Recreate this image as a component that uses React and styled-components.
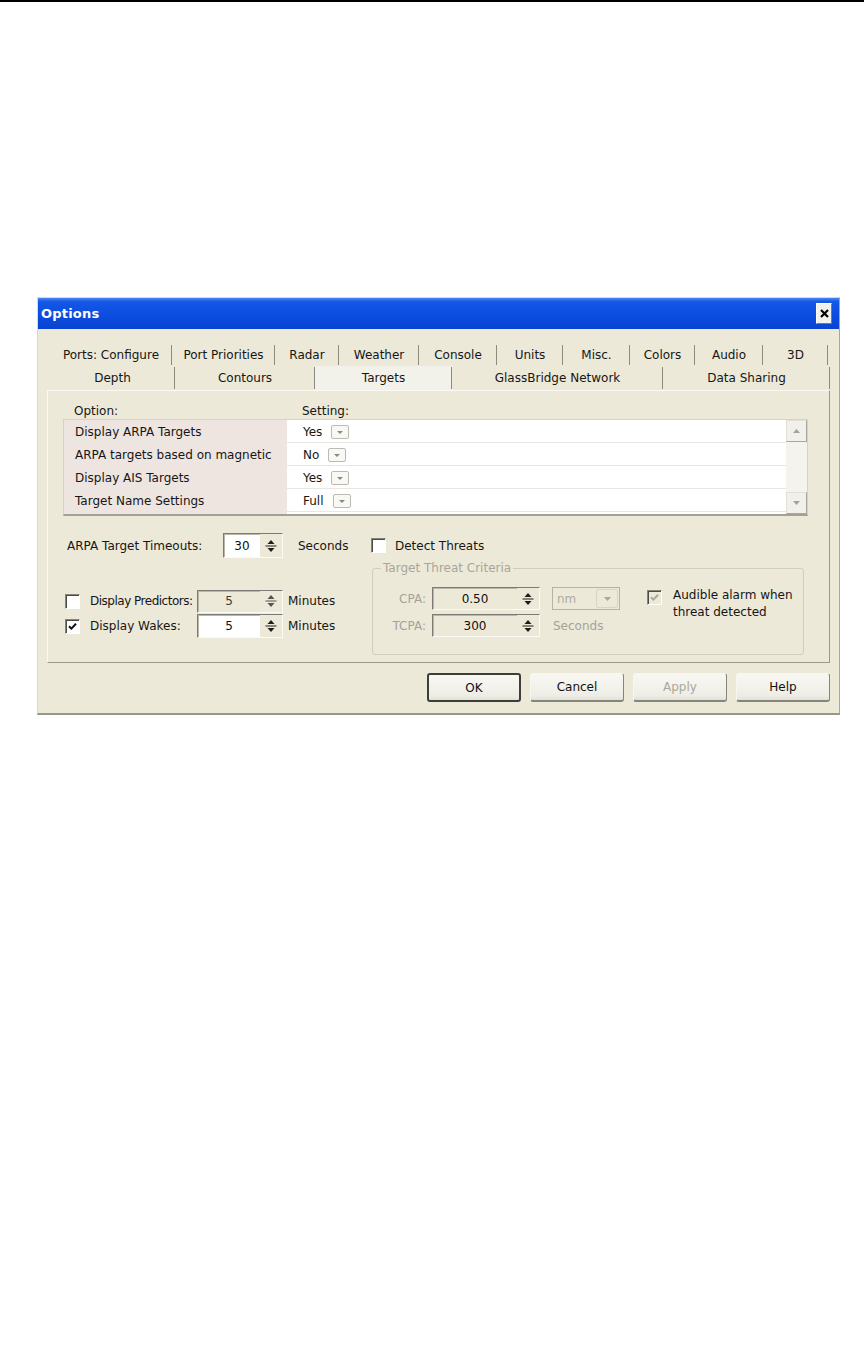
import React from 'react';
import styled, { createGlobalStyle } from 'styled-components';

const GlobalStyle = createGlobalStyle`
  html, body {
    margin: 0;
    padding: 0;
    background: #fff;
  }
  body {
    font-family: 'DejaVu Sans', 'Liberation Sans', sans-serif;
    font-size: 12px;
    color: #161616;
  }
`;

const Page = styled.div`
  width: 864px;
  min-height: 1354px;
  display: flex;
  flex-direction: column;
`;

const TopRule = styled.div`
  height: 2px;
  background: #000;
`;

const Dialog = styled.div`
  margin: 295px 0 0 37px;
  width: 803px;
  box-sizing: border-box;
  background: #ece9d8;
  border: 1px solid #dcd9ca;
  border-right-color: #a9a799;
  border-bottom: 2px solid #99978a;
`;

const TitleBar = styled.div`
  height: 31px;
  display: flex;
  align-items: center;
  justify-content: space-between;
  padding: 0 7px 0 3px;
  background: linear-gradient(180deg, #4a86f2 0%, #1458e6 12%, #0b4cde 60%, #0943d0 100%);
`;

const TitleText = styled.span`
  color: #fff;
  font-weight: bold;
  font-size: 13px;
  letter-spacing: 0.2px;
`;

const CloseButton = styled.div`
  width: 16px;
  height: 21px;
  box-sizing: border-box;
  display: flex;
  align-items: center;
  justify-content: center;
  background: #f2f1ea;
  border: 1px solid #fff;
  border-right-color: #7a7a72;
  border-bottom-color: #7a7a72;
`;

const Body = styled.div`
  padding: 13px 9px 11px 9px;
`;

const TabStrip = styled.div`
  margin-left: 3px;
  display: flex;
  flex-direction: column;
`;

const TabRow = styled.div`
  display: flex;
  height: 24px;
  padding-top: ${(p) => p.$pt || 0}px;
  box-sizing: border-box;
`;

const Tab = styled.div`
  position: relative;
  width: ${(p) => p.$w}px;
  box-sizing: border-box;
  display: flex;
  align-items: center;
  justify-content: center;
  white-space: nowrap;
  background: ${(p) => (p.$active ? '#f3f2ea' : 'transparent')};
  &::after {
    content: '';
    position: absolute;
    right: 0;
    top: 1px;
    bottom: 1px;
    width: 1px;
    background: #8d8b80;
  }
`;

const Panel = styled.div`
  height: 273px;
  box-sizing: border-box;
  border: 1px solid #faf9f4;
  border-right-color: #9b998d;
  border-bottom-color: #9b998d;
  padding: 12px 0 0 15px;
`;

const ListHeader = styled.div`
  display: flex;
  height: 16px;
  align-items: center;
`;

const HeaderCell = styled.div`
  width: ${(p) => (p.$w ? `${p.$w}px` : 'auto')};
  padding-left: ${(p) => p.$pl}px;
  box-sizing: border-box;
`;

const ListBox = styled.div`
  width: 745px;
  height: 97px;
  box-sizing: border-box;
  display: flex;
  border: 1px solid #d6d3c6;
  border-bottom: 2px solid #a3a194;
`;

const ListRows = styled.div`
  flex: 1;
  display: flex;
  flex-direction: column;
  background: linear-gradient(to right, #eee5e1 0, #eee5e1 223px, #fff 223px);
`;

const ListRow = styled.div`
  display: flex;
  height: 23px;
  box-sizing: border-box;
  border-bottom: 1px solid #e9e7e2;
`;

const OptionCell = styled.div`
  width: 223px;
  padding-left: 11px;
  box-sizing: border-box;
  display: flex;
  align-items: center;
  padding-top: 2px;
  white-space: nowrap;
`;

const SettingCell = styled.div`
  flex: 1;
  display: flex;
  align-items: center;
  gap: 9px;
  padding: 2px 0 0 16px;
`;

const MiniCombo = styled.div`
  width: 18px;
  height: 14px;
  box-sizing: border-box;
  display: flex;
  align-items: center;
  justify-content: center;
  border: 1px solid #bcbab2;
  border-radius: 2px;
  background: #f8f8f5;
`;

const ScrollBar = styled.div`
  width: 21px;
  display: flex;
  flex-direction: column;
  background: #f4f3ee;
`;

const ScrollButton = styled.div`
  height: 22px;
  box-sizing: border-box;
  display: flex;
  align-items: center;
  justify-content: center;
  background: #f1f0ea;
  border: 1px solid #e2e0d6;
  border-right-color: #a9a79b;
  border-bottom-color: #a9a79b;
`;

const ScrollTrack = styled.div`
  flex: 1;
`;

const Controls = styled.div`
  margin-top: 17px;
  padding-left: 2px;
  display: grid;
  grid-template-columns: 306px 1fr;
`;

const Column = styled.div`
  display: flex;
  flex-direction: column;
`;

const FieldRow = styled.div`
  display: flex;
  align-items: center;
  height: ${(p) => p.$h}px;
  margin-top: ${(p) => p.$mt || 0}px;
  white-space: nowrap;
`;

const Label = styled.span`
  width: ${(p) => p.$w}px;
  padding-left: ${(p) => p.$pl || 0}px;
  box-sizing: border-box;
  color: ${(p) => (p.$disabled ? '#a5a397' : 'inherit')};
  text-align: ${(p) => p.$align || 'left'};
  letter-spacing: ${(p) => p.$ls || 0}px;
  white-space: nowrap;
  flex: none;
`;

const UnitText = styled.span`
  margin-left: ${(p) => p.$ml}px;
  color: ${(p) => (p.$disabled ? '#a5a397' : 'inherit')};
`;

const SpinBox = styled.div`
  width: ${(p) => p.$w}px;
  height: ${(p) => p.$h || 23}px;
  box-sizing: border-box;
  display: flex;
  flex: none;
  background: ${(p) => (p.$disabled ? '#ece9d8' : '#fff')};
  border: 1px solid #7d7c74;
  border-right-color: #fbfaf5;
  border-bottom-color: #fbfaf5;
  box-shadow: inset 1px 1px 0 #b9b7ab;
`;

const SpinValue = styled.div`
  flex: 1;
  display: flex;
  align-items: center;
  justify-content: center;
  color: ${(p) => (p.$dim ? '#3a3a36' : '#111')};
`;

const SpinButtons = styled.div`
  width: 22px;
  display: flex;
  align-items: center;
  justify-content: center;
  background: #ece9d8;
`;

const CheckBox = styled.div`
  width: 15px;
  height: 15px;
  flex: none;
  box-sizing: border-box;
  display: flex;
  align-items: center;
  justify-content: center;
  background: ${(p) => (p.$disabled ? '#ece9d8' : '#fff')};
  border: 1px solid #858479;
  border-right-color: #fff;
  border-bottom-color: #fff;
  box-shadow: inset 1px 1px 0 #4a4a46;
  margin-right: ${(p) => p.$mr || 0}px;
  margin-top: ${(p) => p.$mt || 0}px;
`;

const GroupBox = styled.fieldset`
  margin: 3px 0 0 1px;
  width: 432px;
  box-sizing: border-box;
  padding: 12px 0 17px 0;
  border: 1px solid #d0cdbd;
  border-radius: 3px;
  display: flex;
`;

const Legend = styled.legend`
  margin-left: 8px;
  padding: 0 2px;
  color: #a8a69a;
  font-size: 12px;
  line-height: 14px;
`;

const CriteriaRows = styled.div`
  display: flex;
  flex-direction: column;
  gap: 4px;
`;

const ComboBox = styled.div`
  margin-left: 12px;
  width: 68px;
  height: 23px;
  box-sizing: border-box;
  display: flex;
  border: 1px solid #b5b3a8;
  background: #ece9d8;
`;

const ComboText = styled.span`
  flex: 1;
  display: flex;
  align-items: center;
  padding-left: 4px;
  color: #aeac9f;
`;

const ComboArrow = styled.div`
  width: 20px;
  margin: 1px;
  display: flex;
  align-items: center;
  justify-content: center;
  border: 1px solid #d6d4c8;
  border-radius: 2px;
`;

const AudibleBlock = styled.div`
  margin-left: 27px;
  display: flex;
  align-items: flex-start;
`;

const AudibleText = styled.span`
  margin-left: 11px;
  width: 128px;
  line-height: 17px;
`;

const ButtonRow = styled.div`
  margin-top: 10px;
  display: flex;
  justify-content: flex-end;
  gap: 9px;
`;

const Button = styled.div`
  width: 94px;
  height: 29px;
  box-sizing: border-box;
  display: flex;
  align-items: center;
  justify-content: center;
  border-radius: 3px;
  background: linear-gradient(180deg, #f8f7f2 0%, #eeede5 85%, #e2e0d5 100%);
  color: ${(p) => (p.$disabled ? '#aba99c' : '#111')};
  border: ${(p) => (p.$default ? '2px solid #3d3d3a' : '1px solid #f7f6f0')};
  border-right-color: ${(p) => (p.$default ? '#3d3d3a' : '#86857c')};
  border-bottom: ${(p) => (p.$default ? '2px solid #3d3d3a' : '2px solid #86857c')};
`;

const Triangle = ({ dir = 'down', color = '#888', w = 7, h = 4 }) => (
  <svg width={w} height={h} viewBox={`0 0 ${w} ${h}`}>
    {dir === 'down' ? (
      <polygon points={`0,0 ${w},0 ${w / 2},${h}`} fill={color} />
    ) : (
      <polygon points={`0,${h} ${w},${h} ${w / 2},0`} fill={color} />
    )}
  </svg>
);

const SpinArrows = ({ color = '#1d1d1b' }) => (
  <svg width="14" height="16" viewBox="0 0 14 16">
    <polygon points="3.5,6 10.5,6 7,2" fill={color} />
    <line x1="1.5" y1="8" x2="12.5" y2="8" stroke={color} strokeWidth="1" />
    <polygon points="3.5,10 10.5,10 7,14" fill={color} />
  </svg>
);

const Tick = ({ color = '#111' }) => (
  <svg width="9" height="9" viewBox="0 0 9 9">
    <path d="M1 4.2 L3.4 6.6 L8 1.8" fill="none" stroke={color} strokeWidth="2" />
  </svg>
);

const Spin = ({ w, h, value, disabled, dim }) => (
  <SpinBox $w={w} $h={h} $disabled={disabled}>
    <SpinValue $dim={dim}>{value}</SpinValue>
    <SpinButtons>
      <SpinArrows color={dim ? '#555550' : '#1d1d1b'} />
    </SpinButtons>
  </SpinBox>
);

const tabsTop = [
  ['Ports: Configure', 122],
  ['Port Priorities', 103],
  ['Radar', 64],
  ['Weather', 80],
  ['Console', 78],
  ['Units', 66],
  ['Misc.', 67],
  ['Colors', 65],
  ['Audio', 68],
  ['3D', 65],
];

const tabsBottom = [
  ['Depth', 125],
  ['Contours', 140],
  ['Targets', 137, true],
  ['GlassBridge Network', 211],
  ['Data Sharing', 167],
];

const options = [
  ['Display ARPA Targets', 'Yes'],
  ['ARPA targets based on magnetic', 'No'],
  ['Display AIS Targets', 'Yes'],
  ['Target Name Settings', 'Full'],
];

export default function App() {
  return (
    <Page>
      <GlobalStyle />
      <TopRule />
      <Dialog>
        <TitleBar>
          <TitleText>Options</TitleText>
          <CloseButton>
            <svg width="9" height="9" viewBox="0 0 9 9">
              <path d="M1 1 L8 8 M8 1 L1 8" stroke="#000" strokeWidth="2.2" />
            </svg>
          </CloseButton>
        </TitleBar>
        <Body>
          <TabStrip>
            <TabRow $pt={2}>
              {tabsTop.map(([name, w]) => (
                <Tab key={name} $w={w}>{name}</Tab>
              ))}
            </TabRow>
            <TabRow>
              {tabsBottom.map(([name, w, active]) => (
                <Tab key={name} $w={w} $active={active}>{name}</Tab>
              ))}
            </TabRow>
          </TabStrip>

          <Panel>
            <ListHeader>
              <HeaderCell $w={224} $pl={11}>Option:</HeaderCell>
              <HeaderCell $pl={15}>Setting:</HeaderCell>
            </ListHeader>
            <ListBox>
              <ListRows>
                {options.map(([name, value]) => (
                  <ListRow key={name}>
                    <OptionCell>{name}</OptionCell>
                    <SettingCell>
                      <span>{value}</span>
                      <MiniCombo>
                        <Triangle color="#8c8c86" w={6} h={3} />
                      </MiniCombo>
                    </SettingCell>
                  </ListRow>
                ))}
              </ListRows>
              <ScrollBar>
                <ScrollButton>
                  <Triangle dir="up" color="#a4a39a" w={7} h={4} />
                </ScrollButton>
                <ScrollTrack />
                <ScrollButton>
                  <Triangle color="#a4a39a" w={7} h={4} />
                </ScrollButton>
              </ScrollBar>
            </ListBox>

            <Controls>
              <Column>
                <FieldRow $h={25}>
                  <Label $w={158} $pl={2}>ARPA Target Timeouts:</Label>
                  <Spin w={60} h={25} value="30" />
                  <UnitText $ml={15}>Seconds</UnitText>
                </FieldRow>
                <FieldRow $h={24} $mt={31}>
                  <CheckBox $mr={10} />
                  <Label $w={107} $ls={-0.5}>Display Predictors:</Label>
                  <Spin w={86} h={23} value="5" disabled dim />
                  <UnitText $ml={5}>Minutes</UnitText>
                </FieldRow>
                <FieldRow $h={24} $mt={1}>
                  <CheckBox $mr={10}>
                    <Tick />
                  </CheckBox>
                  <Label $w={107}>Display Wakes:</Label>
                  <Spin w={86} h={24} value="5" />
                  <UnitText $ml={5}>Minutes</UnitText>
                </FieldRow>
              </Column>

              <Column>
                <FieldRow $h={25}>
                  <CheckBox $mr={9} />
                  <span>Detect Threats</span>
                </FieldRow>
                <GroupBox>
                  <Legend>Target Threat Criteria</Legend>
                  <CriteriaRows>
                    <FieldRow $h={23}>
                      <Label $w={53} $align="right" $disabled>CPA:</Label>
                      <UnitText $ml={6} />
                      <Spin w={108} h={23} value="0.50" disabled />
                      <ComboBox>
                        <ComboText>nm</ComboText>
                        <ComboArrow>
                          <Triangle color="#a8a69a" w={7} h={4} />
                        </ComboArrow>
                      </ComboBox>
                    </FieldRow>
                    <FieldRow $h={23}>
                      <Label $w={53} $align="right" $disabled>TCPA:</Label>
                      <UnitText $ml={6} />
                      <Spin w={108} h={23} value="300" disabled />
                      <UnitText $ml={13} $disabled>Seconds</UnitText>
                    </FieldRow>
                  </CriteriaRows>
                  <AudibleBlock>
                    <CheckBox $disabled $mt={3}>
                      <Tick color="#a9a79b" />
                    </CheckBox>
                    <AudibleText>Audible alarm when threat detected</AudibleText>
                  </AudibleBlock>
                </GroupBox>
              </Column>
            </Controls>
          </Panel>

          <ButtonRow>
            <Button $default>OK</Button>
            <Button>Cancel</Button>
            <Button $disabled>Apply</Button>
            <Button>Help</Button>
          </ButtonRow>
        </Body>
      </Dialog>
    </Page>
  );
}
